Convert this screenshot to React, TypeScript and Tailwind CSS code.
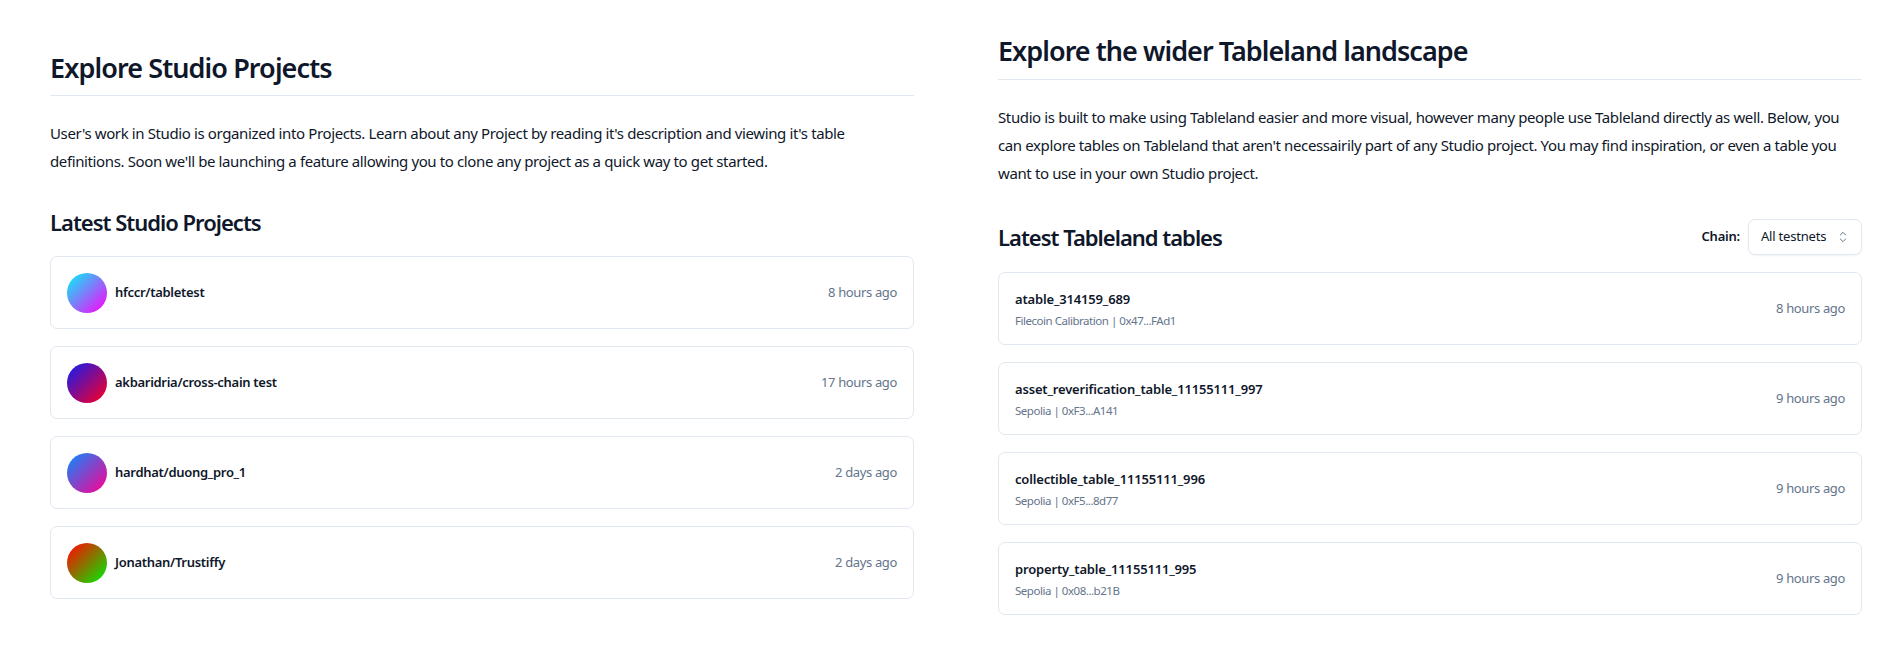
const font = "[font-family:'Noto_Sans',sans-serif]";

function Card({ children }: { children: React.ReactNode }) {
  return (
    <div className="flex h-[73px] items-center justify-between rounded-[7px] border border-[#e2e8f0] bg-white px-4">
      {children}
    </div>
  );
}

const projects = [
  { name: "hfccr/tabletest", time: "8 hours ago", grad: "bg-[linear-gradient(135deg,#22d3f8_15%,#e020fb_85%)]" },
  { name: "akbaridria/cross-chain test", time: "17 hours ago", grad: "bg-[linear-gradient(135deg,#3018d8_15%,#e0003c_85%)]" },
  { name: "hardhat/duong_pro_1", time: "2 days ago", grad: "bg-[linear-gradient(135deg,#2a78f0_15%,#e010a0_85%)]" },
  { name: "Jonathan/Trustiffy", time: "2 days ago", grad: "bg-[linear-gradient(135deg,#e82000_15%,#20d000_85%)]" },
];

const tables = [
  { name: "atable_314159_689", sub: "Filecoin Calibration | 0x47...FAd1", time: "8 hours ago" },
  { name: "asset_reverification_table_11155111_997", sub: "Sepolia | 0xF3...A141", time: "9 hours ago" },
  { name: "collectible_table_11155111_996", sub: "Sepolia | 0xF5...8d77", time: "9 hours ago" },
  { name: "property_table_11155111_995", sub: "Sepolia | 0x08...b21B", time: "9 hours ago" },
];

export default function App() {
  return (
    <div className={`${font} flex h-[663px] gap-[84px] overflow-hidden bg-white pl-[50px] pr-[26px] text-[#0f172a]`}>
      <section className="w-[864px] shrink-0 pt-[49px]">
        <h1 className="h-[47px] border-b border-[#e2e8f0] text-[27px] font-semibold leading-[38px] tracking-[-0.9px]">Explore Studio Projects</h1>
        <p className="mt-[23px] text-[15px] leading-[28px] tracking-[-0.38px]">
          User's work in Studio is organized into Projects. Learn about any Project by reading it's description and viewing it's table definitions. Soon we'll be launching a feature allowing you to clone any project as a quick way to get started.
        </p>
        <h2 className="mt-[31px] text-[22px] font-semibold leading-[32px] tracking-[-1px]">Latest Studio Projects</h2>
        <div className="mt-[18px] flex flex-col gap-[17px]">
          {projects.map((p) => (
            <Card key={p.name}>
              <div className="flex items-center gap-2">
                <div className={`h-10 w-10 rounded-full ${p.grad}`} />
                <span className="text-[13px] font-semibold tracking-[-0.3px]">{p.name}</span>
              </div>
              <span className="text-[13px] tracking-[-0.36px] text-[#64748b]">{p.time}</span>
            </Card>
          ))}
        </div>
      </section>
      <section className="w-[864px] shrink-0 pt-[33px]">
        <h1 className="h-[47px] border-b border-[#e2e8f0] text-[27px] font-semibold leading-[36px] tracking-[-0.95px]">Explore the wider Tableland landscape</h1>
        <p className="mt-[23px] text-[15px] leading-[28px] tracking-[-0.38px]">
          Studio is built to make using Tableland easier and more visual, however many people use Tableland directly as well. Below, you can explore tables on Tableland that aren't necessairily part of any Studio project. You may find inspiration, or even a table you want to use in your own Studio project.
        </p>
        <div className="mt-[32px] flex h-[36px] items-center justify-between">
          <h2 className="text-[22px] font-semibold leading-[32px] tracking-[-1px]">Latest Tableland tables</h2>
          <div className="flex items-center gap-2">
            <span className="text-[13px] font-semibold tracking-[-0.2px]">Chain:</span>
            <div className="flex h-[36px] w-[114px] items-center justify-between rounded-[7px] border border-[#e2e8f0] pl-3 pr-[10px] shadow-[0_1px_2px_rgba(15,23,42,0.05)]">
              <span className="text-[13px] tracking-[-0.2px]">All testnets</span>
              <svg width="16" height="16" viewBox="0 0 24 24" fill="none" stroke="#64748b" strokeWidth="1.5" strokeLinecap="round" strokeLinejoin="round"><path d="m8 15 4 4 4-4" /><path d="m8 9 4-4 4 4" /></svg>
            </div>
          </div>
        </div>
        <div className="mt-[17px] flex flex-col gap-[17px]">
          {tables.map((t) => (
            <Card key={t.name}>
              <div className="flex flex-col gap-[4px]">
                <span className="text-[13px] font-semibold leading-[20px] tracking-[-0.17px]">{t.name}</span>
                <span className="text-[11.5px] leading-[16px] tracking-[-0.47px] text-[#64748b]">{t.sub}</span>
              </div>
              <span className="text-[13px] tracking-[-0.36px] text-[#64748b]">{t.time}</span>
            </Card>
          ))}
        </div>
      </section>
    </div>
  );
}
